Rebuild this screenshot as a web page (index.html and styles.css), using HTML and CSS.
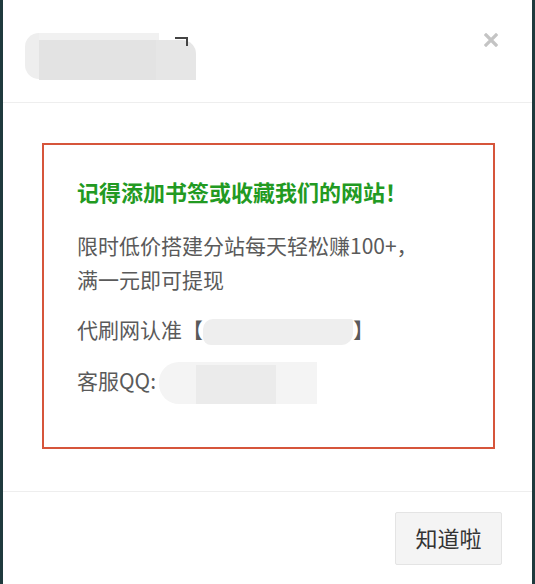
FILE: index.html
```html
<!DOCTYPE html>
<html lang="zh-CN">
<head>
<meta charset="utf-8">
<link rel="stylesheet" href="styles.css">
</head>
<body>
<div class="modal">
  <div class="modal-header">
    <div class="title-blur">
      <span class="blur-round"></span>
      <span class="blur-main"><span class="blur-top"></span></span>
      <span class="blur-tail"></span>
      <span class="corner"></span>
    </div>
    <svg class="close" width="14" height="14" viewBox="0 0 14 14"><path d="M2 2L12 12M12 2L2 12" stroke="#c4c4c4" stroke-width="3.2" stroke-linecap="square"/></svg>
  </div>
  <div class="modal-body">
    <div class="notice">
      <p class="notice-title">记得添加书签或收藏我们的网站！</p>
      <p class="line">限时低价搭建分站每天轻松赚100+，<br>满一元即可提现</p>
      <p class="line">代刷网认准【<span class="blur-site"></span>】</p>
      <p class="line">客服QQ:<span class="blur-qq"><span class="blur-qq-dark"></span></span></p>
    </div>
  </div>
  <div class="modal-footer">
    <button class="btn">知道啦</button>
  </div>
</div>
</body>
</html>
```

FILE: styles.css
```css
html, body {
  margin: 0;
  padding: 0;
  height: 584px;
  overflow: hidden;
}
body {
  background: #1f3a3d;
  padding: 0 3px 0 3px;
  font-family: "Noto Sans CJK SC", "Noto Sans", sans-serif;
}
.modal {
  background: #fff;
  height: 584px;
  display: flex;
  flex-direction: column;
}
.modal-header {
  height: 103px;
  border-bottom: 1px solid #eeeeee;
  display: flex;
  align-items: center;
  justify-content: space-between;
  padding: 0 34px 0 22px;
  box-sizing: border-box;
  flex-shrink: 0;
}
.title-blur {
  position: relative;
  display: flex;
  align-items: stretch;
  height: 47px;
  margin-top: 10px;
}
.blur-round {
  width: 14px;
  height: 46px;
  background: #eeeeee;
  border-radius: 23px 0 0 23px;
  align-self: center;
}
.blur-main {
  width: 117px;
  background: #e3e3e3;
  margin-top: 7px;
  position: relative;
}
.blur-top {
  position: absolute;
  left: 0;
  top: -7px;
  width: 120px;
  height: 7px;
  background: #f1f1f1;
}
.blur-tail {
  width: 40px;
  margin-top: 7px;
  background: #e6e6e6;
  border-radius: 0 14px 0 0;
}
.corner {
  position: absolute;
  left: 150px;
  top: 4px;
  width: 13px;
  height: 9px;
  border-top: 2px solid #444;
  border-right: 2px solid #444;
  box-sizing: border-box;
}
.close {
  margin-top: -22px;
}
.modal-body {
  padding: 40px 37px 42px 39px;
  border-bottom: 1px solid #eeeeee;
  flex-shrink: 0;
}
.notice {
  border: 2px solid #d6553b;
  height: 306px;
  box-sizing: border-box;
  padding: 31px 20px 0 33px;
}
.notice p {
  margin: 0;
}
.notice-title {
  color: #229a22;
  font-size: 22px;
  font-weight: bold;
  line-height: 30px;
  margin-bottom: 22px !important;
}
.line {
  color: #5a5a5a;
  font-size: 21px;
  line-height: 34px;
  margin-bottom: 16px !important;
}
.blur-site {
  display: inline-block;
  width: 150px;
  height: 26px;
  background: #eeeeee;
  vertical-align: middle;
  border-radius: 10px 2px 12px 8px;
}
.blur-qq {
  display: inline-block;
  width: 158px;
  height: 42px;
  background: #f4f4f4;
  vertical-align: middle;
  border-radius: 20px 0 0 20px;
  position: relative;
  margin-left: 3px;
}
.blur-qq-dark {
  position: absolute;
  left: 37px;
  top: 3px;
  width: 80px;
  height: 39px;
  background: #ebebeb;
}
.modal-footer {
  flex: 1;
  display: flex;
  justify-content: flex-end;
  align-items: flex-start;
  padding: 20px 30px 0 0;
}
.btn {
  width: 107px;
  height: 53px;
  background: #f4f4f4;
  border: 1px solid #e4e4e4;
  border-radius: 2px;
  font-family: "Noto Sans CJK SC", sans-serif;
  font-size: 22px;
  line-height: 1;
  color: #333;
  padding: 0 0 4px 0;
}
```
